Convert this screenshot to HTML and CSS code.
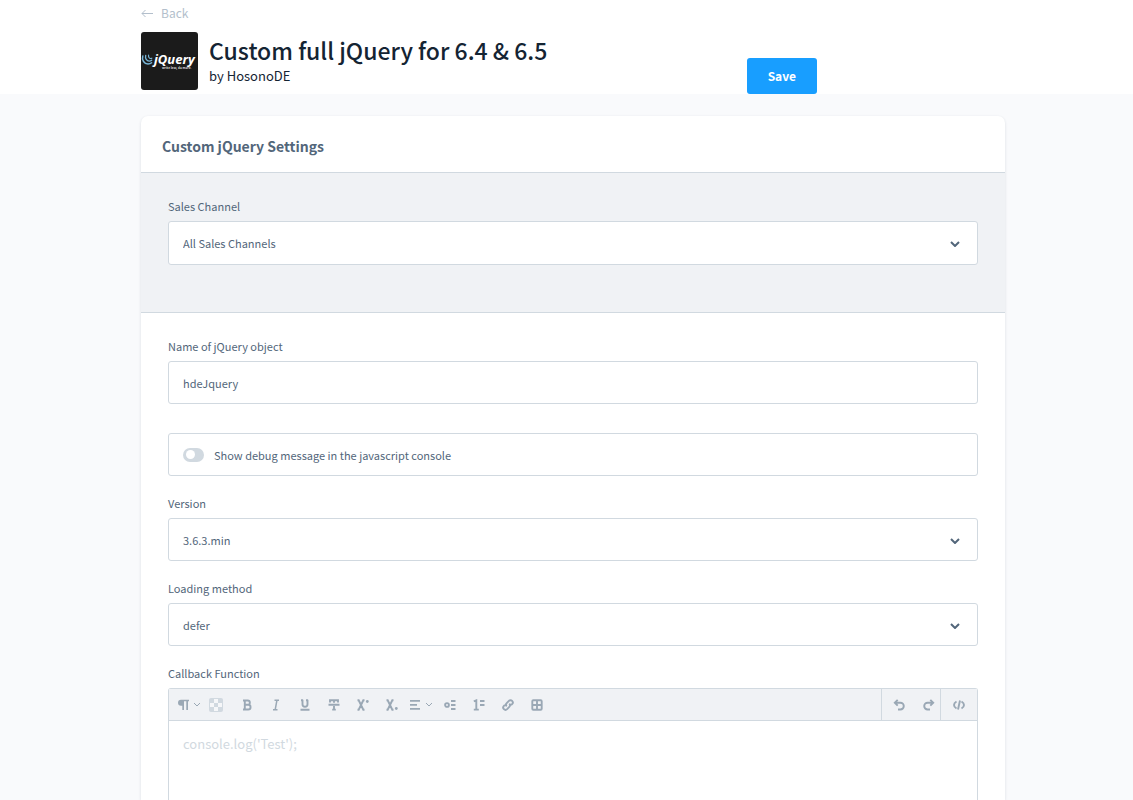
FILE: index.html
```html
<!DOCTYPE html>
<html lang="en">
<head>
<meta charset="utf-8">
<title>Custom full jQuery for 6.4 &amp; 6.5</title>
<link rel="stylesheet" href="styles.css">
</head>
<body>
<div class="app">
  <header class="page-header">
    <a class="back" href="#">
      <svg width="12" height="8" viewBox="0 0 12 8"><path d="M12 4.500H1M4.500 1L1 4.500 4.500 8"/></svg>
      Back
    </a>
    <div class="heading">
      <svg class="logo" viewBox="0 0 57 58" role="img" aria-label="jQuery">
        <rect width="57" height="58" rx="3" fill="#1b1b1b"/>
        <g fill="none" stroke="#78b6d8" stroke-linecap="round">
          <path stroke-width="1.5" d="M1.800 24c-1.300 4 1.500 8 5.200 8 1.500 0 2.700-.4 3.600-1.200"/>
          <path stroke-width="1.300" d="M4.700 23.500c-.8 3 1 5.600 3.500 5.600 1 0 1.900-.3 2.500-.9"/>
          <path stroke-width="1.100" d="M7.600 23c-.4 1.900.6 3.400 2.100 3.500.5 0 .9-.1 1.200-.4"/>
        </g>
        <text class="logo-name" x="13" y="32">jQuery</text>
        <text class="logo-tag" x="21" y="37">write less, do more.</text>
      </svg>
      <div class="titles">
        <h1>Custom full jQuery for 6.4 &amp; 6.5</h1>
        <p>by HosonoDE</p>
      </div>
      <button class="save" type="button">Save</button>
    </div>
  </header>

  <main class="content">
    <form class="card">
      <h2 class="card-title">Custom jQuery Settings</h2>

      <section class="channel">
        <div class="field">
          <label for="channel">Sales Channel</label>
          <div class="select">
            <select id="channel"><option>All Sales Channels</option></select>
            <svg width="10" height="6" viewBox="0 0 10 6"><path d="M1 1l4 4 4-4"/></svg>
          </div>
        </div>
      </section>

      <section class="settings">
        <div class="field name-field">
          <label for="object-name">Name of jQuery object</label>
          <input class="control" id="object-name" type="text" value="hdeJquery">
        </div>

        <label class="switch">
          <input type="checkbox">
          Show debug message in the javascript console
        </label>

        <div class="field">
          <label for="version">Version</label>
          <div class="select">
            <select id="version"><option>3.6.3.min</option></select>
            <svg width="10" height="6" viewBox="0 0 10 6"><path d="M1 1l4 4 4-4"/></svg>
          </div>
        </div>

        <div class="field">
          <label for="loading">Loading method</label>
          <div class="select">
            <select id="loading"><option>defer</option></select>
            <svg width="10" height="6" viewBox="0 0 10 6"><path d="M1 1l4 4 4-4"/></svg>
          </div>
        </div>

        <div class="field editor-field">
          <label for="callback">Callback Function</label>
          <div class="editor">
            <div class="toolbar">
              <div class="tools">
                <button type="button" aria-label="Paragraph">
                  <svg width="12" height="12" viewBox="0 0 12 12"><path class="fill" d="M1 3.700A3 3 0 0 1 4 .7h8v1.600h-1V11H9.300V2.300H7V11H5.300V6.700H4a3 3 0 0 1-3-3z"/></svg>
                  <svg class="caret" width="8" height="5" viewBox="0 0 8 5"><path d="M1 1l3 3 3-3"/></svg>
                </button>
                <button class="colour" type="button" aria-label="Text colour">
                  <svg width="14" height="14" viewBox="0 0 14 14"><rect width="14" height="14" rx="2" fill="#d1d9e0"/><path fill="#f6f7f9" d="M5 1h4v4H5zM1 5h4v4H1zM9 5h4v4H9zM5 9h4v4H5z"/></svg>
                </button>
                <button type="button" aria-label="Bold">
                  <svg width="12" height="12" viewBox="0 0 12 12"><path class="line" d="M2 1.500h4.700a2.100 2.100 0 0 1 0 4.300H3.500h3.700a2.300 2.300 0 0 1 0 4.700H2M3.800 1.500v9"/></svg>
                </button>
                <button type="button" aria-label="Italic">
                  <svg width="12" height="12" viewBox="0 0 12 12"><path class="line thin" d="M4.500 1.300h4.500M3 10.700h4.500M6.900 1.300L5.200 10.700"/></svg>
                </button>
                <button type="button" aria-label="Underline">
                  <svg width="12" height="12" viewBox="0 0 12 12"><path class="line" d="M2 1.300h2M7 1.300h2M3.500.8v4.500a2.500 2.500 0 0 0 5 0V.8M1.500 10.800h9"/></svg>
                </button>
                <button type="button" aria-label="Strikethrough">
                  <svg width="12" height="12" viewBox="0 0 12 12"><path class="line" d="M2 3.500V1.300h8v2.200M6 1.300v2.500M.5 5.700h11M6 7v4M4.200 10.600h3.600"/></svg>
                </button>
                <button type="button" aria-label="Superscript">
                  <svg width="12" height="12" viewBox="0 0 12 12"><path class="line" d="M.5 1.300h1.200l4.600 9.400h1.200M7.500 1.300H6.300L1.700 10.700H.5"/><circle class="fill" cx="10.300" cy="2.500" r="1.400"/></svg>
                </button>
                <button type="button" aria-label="Subscript">
                  <svg width="12" height="12" viewBox="0 0 12 12"><path class="line" d="M.5 1.300h1.200l4.600 9.400h1.200M7.500 1.300H6.300L1.700 10.700H.5"/><circle class="fill" cx="10.300" cy="9.500" r="1.400"/></svg>
                </button>
                <button type="button" aria-label="Alignment">
                  <svg width="12" height="12" viewBox="0 0 12 12"><path class="line" d="M1 1.900h10M1 5.900h7M1 9.900h10"/></svg>
                  <svg class="caret" width="8" height="5" viewBox="0 0 8 5"><path d="M1 1l3 3 3-3"/></svg>
                </button>
                <button type="button" aria-label="Bulleted list">
                  <svg width="12" height="12" viewBox="0 0 12 12"><circle class="line" cx="3" cy="6" r="1.900"/><path class="line" d="M7 2h4.500M7 6h4.500M7 10h4.500"/></svg>
                </button>
                <button type="button" aria-label="Numbered list">
                  <svg width="12" height="12" viewBox="0 0 12 12"><path class="line" d="M.8 2.300L3.300 1.300v9.400M.8 10.600h5M7 2h4.500M7 6h4.500"/></svg>
                </button>
                <button type="button" aria-label="Link">
                  <svg width="12" height="12" viewBox="0 0 12 12"><path class="line" d="M4.700 7.300a2.200 2.200 0 0 1 0-3.100l2.200-2.300a2.200 2.200 0 0 1 3.200 3.200L9 6.200M7.300 4.700a2.200 2.200 0 0 1 0 3.100L5.100 10.100a2.200 2.200 0 0 1-3.200-3.200L3 5.800"/></svg>
                </button>
                <button type="button" aria-label="Table">
                  <svg width="12" height="12" viewBox="0 0 12 12"><rect class="line" x="1.300" y="1.300" width="9.400" height="9.400" rx="1"/><path class="line" d="M6 1v10M1 6h10"/></svg>
                </button>
              </div>
              <div class="history">
                <button type="button" aria-label="Undo">
                  <svg width="12" height="12" viewBox="0 0 12 12"><path class="line" d="M4.700.8L1.800 3.700l2.900 2.900M2 3.700h5.400a3.400 3.400 0 0 1 0 6.800H5"/></svg>
                </button>
                <button type="button" aria-label="Redo">
                  <svg width="12" height="12" viewBox="0 0 12 12"><path class="line" d="M7.300.8l2.900 2.900-2.900 2.900M10 3.700H4.600a3.400 3.400 0 0 0 0 6.800H7"/></svg>
                </button>
              </div>
              <div class="source">
                <button type="button" aria-label="Source code">
                  <svg width="12" height="12" viewBox="0 0 12 12"><path class="line" d="M3.500 2.500C1 4 1 4.800 1 6s0 2 2.500 3.500M8.500 2.500C11 4 11 4.800 11 6s0 2-2.500 3.500M7 1.500l-2 9"/></svg>
                </button>
              </div>
            </div>
            <textarea id="callback" placeholder="console.log('Test');"></textarea>
          </div>
        </div>
      </section>
    </form>
  </main>
</div>
</body>
</html>
```

FILE: styles.css
```css
* { box-sizing: border-box; }

body {
  margin: 0;
  background: #f9fafc;
  color: #52667a;
  font: 11px/20px "Noto Sans CJK SC", "Noto Sans", sans-serif;
}

h1, h2, p { margin: 0; }

button, input, select, textarea {
  font: inherit;
  color: inherit;
  margin: 0;
}

.app {
  display: flex;
  flex-direction: column;
  height: 100vh;
  min-height: 760px;
}

/* Header */
.page-header {
  display: flex;
  flex-direction: column;
  gap: 9px;
  background: #fff;
  padding: 3px 128px 0 141px;
}

.back {
  display: flex;
  align-items: center;
  align-self: flex-start;
  gap: 8px;
  color: #b3bfcc;
  font-size: 12px;
  text-decoration: none;
}

.back svg {
  fill: none;
  stroke: #b3bfcc;
}

.heading {
  display: grid;
  grid-template-columns: 57px 1fr auto;
  column-gap: 11px;
  min-height: 62px;
  padding-right: 188px;
}

.logo {
  width: 57px;
  height: 58px;
}

.logo-name {
  font: italic bold 13px "Open Sans", sans-serif;
  fill: #fff;
}

.logo-tag {
  font: bold 3px "Open Sans", sans-serif;
  fill: #ddd;
}

.titles {
  padding-top: 2px;
  color: #142433;
}

.titles h1 {
  font-size: 23px;
  font-weight: 500;
  line-height: 32px;
}

.titles p { font-size: 13px; }

.save {
  align-self: end;
  height: 36px;
  padding: 0 21px;
  border: 0;
  border-radius: 3px;
  background: #189eff;
  color: #fff;
  font-size: 12px;
  font-weight: 700;
}

/* Card */
.content {
  display: flex;
  flex: 1;
  min-height: 0;
  padding: 22px 128px 0 141px;
}

.card {
  display: flex;
  flex: 1;
  flex-direction: column;
  background: #fff;
  border-radius: 7px 7px 0 0;
  box-shadow: 0 1px 3px rgba(30, 50, 80, 0.14);
}

.card-title {
  padding: 18px 21px 14px;
  border-bottom: 1px solid #d1d9e0;
  font-size: 14px;
  font-weight: 700;
  line-height: 24px;
}

.channel {
  padding: 23px 27px 47px;
  background: #f0f2f5;
  border-bottom: 1px solid #d1d9e0;
}

.settings {
  display: flex;
  flex: 1;
  flex-direction: column;
  gap: 17px;
  padding: 23px 27px 0;
}

.field {
  display: flex;
  flex-direction: column;
  gap: 5px;
}

.name-field { margin-bottom: 12px; }

.select { position: relative; }

.control, .select select, .switch {
  display: block;
  width: 100%;
  height: 43px;
  padding: 0 14px;
  border: 1px solid #d1d9e0;
  border-radius: 3px;
  background: #fff;
}

.channel .select select { height: 44px; }

.select select { appearance: none; }

.select svg {
  position: absolute;
  right: 18px;
  top: 20px;
  fill: none;
  stroke: #52667a;
  stroke-width: 2;
  pointer-events: none;
}

.switch {
  display: flex;
  align-items: center;
  gap: 10px;
}

.switch input {
  display: flex;
  align-items: center;
  appearance: none;
  width: 21px;
  height: 14px;
  padding: 0 3px;
  border-radius: 7px;
  background: #d1d9e0;
}

.switch input::before {
  content: "";
  width: 9px;
  height: 9px;
  border-radius: 50%;
  background: #fff;
}

.switch input:checked { justify-content: flex-end; background: #189eff; }

/* Editor */
.editor-field { flex: 1; }

.editor {
  display: flex;
  flex: 1;
  flex-direction: column;
  border: 1px solid #d1d9e0;
  border-bottom: 0;
  border-radius: 3px 3px 0 0;
}

.toolbar {
  display: flex;
  height: 32px;
  background: #f0f2f5;
  border-bottom: 1px solid #d1d9e0;
}

.tools {
  display: flex;
  flex: 1;
  padding-left: 5px;
}

.toolbar button {
  display: flex;
  align-items: center;
  justify-content: center;
  gap: 4px;
  padding: 0;
  border: 0;
  background: none;
}

.tools button { width: 29px; }

.tools .colour { padding-right: 3px; }

.toolbar svg { flex: none; }

.line {
  fill: none;
  stroke: #9aa8b5;
  stroke-width: 1.9;
}

.thin { stroke-width: 1.5; }

.fill { fill: #9aa8b5; }

.caret {
  fill: none;
  stroke: #9aa8b5;
}

.history {
  display: flex;
  gap: 18px;
  padding: 0 5px 0 11px;
  border-left: 1px solid #d1d9e0;
}

.source {
  display: flex;
  padding: 0 12px;
  border-left: 1px solid #d1d9e0;
}

.editor textarea {
  flex: 1;
  padding: 13px 14px;
  border: 0;
  background: #fff;
  font-size: 13px;
  resize: none;
  outline: 0;
}

.editor textarea::placeholder { color: #d1d9e0; }
```
